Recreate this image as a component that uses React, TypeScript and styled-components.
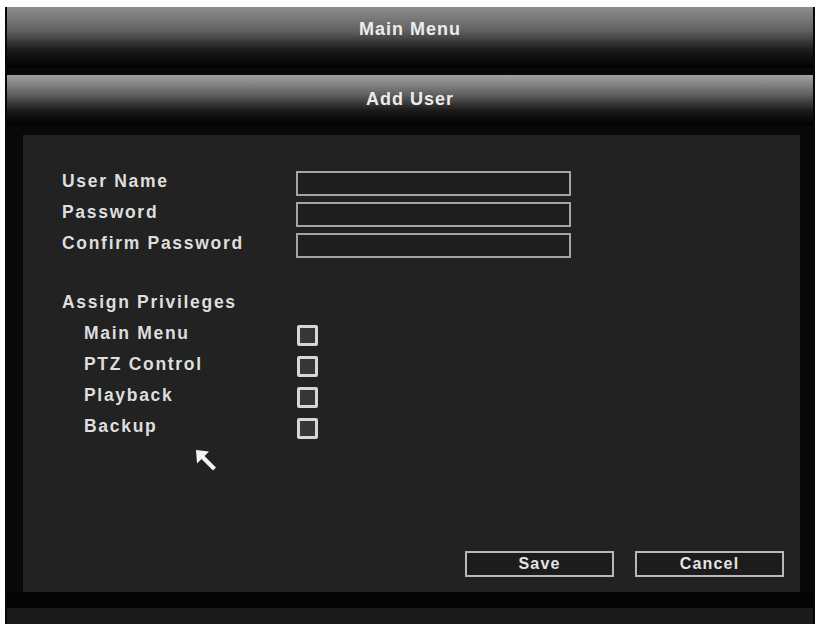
import styled, { createGlobalStyle } from "styled-components";

const GlobalStyle = createGlobalStyle`
  html, body {
    margin: 0;
    padding: 0;
    background: #ffffff;
  }
  body {
    font-family: "Liberation Sans", Arial, sans-serif;
  }
`;

const Screen = styled.div`
  width: 810px;
  height: 617px;
  margin: 7px 0 0 5px;
  background: #080808;
  display: flex;
  flex-direction: column;
  padding: 0 2px;
  box-sizing: border-box;
`;

const Bar = styled.div<{ $height: number; $top: string }>`
  height: ${({ $height }) => $height}px;
  flex: none;
  display: flex;
  justify-content: center;
  padding-top: ${({ $height }) => ($height > 55 ? 12 : 14)}px;
  box-sizing: border-box;
  background: linear-gradient(
    ${({ $top }) => $top} 0%,
    #626262 38%,
    #1c1c1c 70%,
    #000000 100%
  );
  color: #ececec;
  font-size: 18px;
  font-weight: bold;
  letter-spacing: 1px;
`;

const Spacer = styled.div<{ $height: number }>`
  height: ${({ $height }) => $height}px;
  flex: none;
`;

const Panel = styled.div`
  position: relative;
  height: 457px;
  flex: none;
  margin: 0 13px 0 16px;
  background: #222222;
  padding: 33px 16px 15px 39px;
  box-sizing: border-box;
  display: flex;
  flex-direction: column;
`;

const Row = styled.div<{ $indent?: number }>`
  height: 31px;
  display: grid;
  grid-template-columns: ${({ $indent = 0 }) => 234 - $indent}px 1fr;
  padding-left: ${({ $indent = 0 }) => $indent}px;
  align-items: center;
`;

const Label = styled.span`
  margin-top: -4px;
  color: #dedede;
  font-size: 17.5px;
  font-weight: bold;
  letter-spacing: 1.7px;
  white-space: nowrap;
`;

const Field = styled.div`
  width: 275px;
  height: 25px;
  box-sizing: border-box;
  border: 2px solid #a4a4a4;
  background: #1e1e1e;
`;

const Section = styled.div`
  margin-top: 28px;
`;

const Check = styled.div`
  width: 21px;
  height: 21px;
  box-sizing: border-box;
  margin-left: 1px;
  border: 3px solid #d6d6d6;
  border-radius: 2px;
  background: #363636;
`;

const Actions = styled.div`
  margin-top: auto;
  display: flex;
  justify-content: flex-end;
  gap: 21px;
`;

const Button = styled.button`
  width: 149px;
  height: 26px;
  box-sizing: border-box;
  border: 2px solid #b8b8b8;
  background: #1c1c1c;
  color: #e4e4e4;
  font-family: "Liberation Sans", Arial, sans-serif;
  font-size: 16px;
  font-weight: bold;
  letter-spacing: 1.2px;
  padding: 0;
`;

const Cursor = styled.svg`
  position: absolute;
  left: 172px;
  top: 314px;
`;

const Footer = styled.div`
  flex: 1;
  display: flex;
  flex-direction: column;
`;

const FooterGap = styled.div`
  height: 16px;
  background: #050505;
`;

const FooterBase = styled.div`
  flex: 1;
  background: #1b1b1b;
`;

const fields = ["User Name", "Password", "Confirm Password"];
const privileges = ["Main Menu", "PTZ Control", "Playback", "Backup"];

export default function App() {
  return (
    <>
      <GlobalStyle />
      <Screen>
        <Bar $height={61} $top="#8e8e8e">
          Main Menu
        </Bar>
        <Spacer $height={7} />
        <Bar $height={50} $top="#a2a2a2">
          Add User
        </Bar>
        <Spacer $height={10} />
        <Panel>
          {fields.map((f) => (
            <Row key={f}>
              <Label>{f}</Label>
              <Field />
            </Row>
          ))}
          <Section>
            <Row>
              <Label>Assign Privileges</Label>
            </Row>
            {privileges.map((p) => (
              <Row key={p} $indent={22}>
                <Label>{p}</Label>
                <Check />
              </Row>
            ))}
          </Section>
          <Actions>
            <Button>Save</Button>
            <Button>Cancel</Button>
          </Actions>
          <Cursor width="24" height="24" viewBox="0 0 24 24">
            <path
              d="M1 1 L14 2.5 L9.5 7 L21 18.5 L18 21.5 L6.5 10 L2 14.5 Z"
              fill="#f4f4f4"
            />
          </Cursor>
        </Panel>
        <Footer>
          <FooterGap />
          <FooterBase />
        </Footer>
      </Screen>
    </>
  );
}
